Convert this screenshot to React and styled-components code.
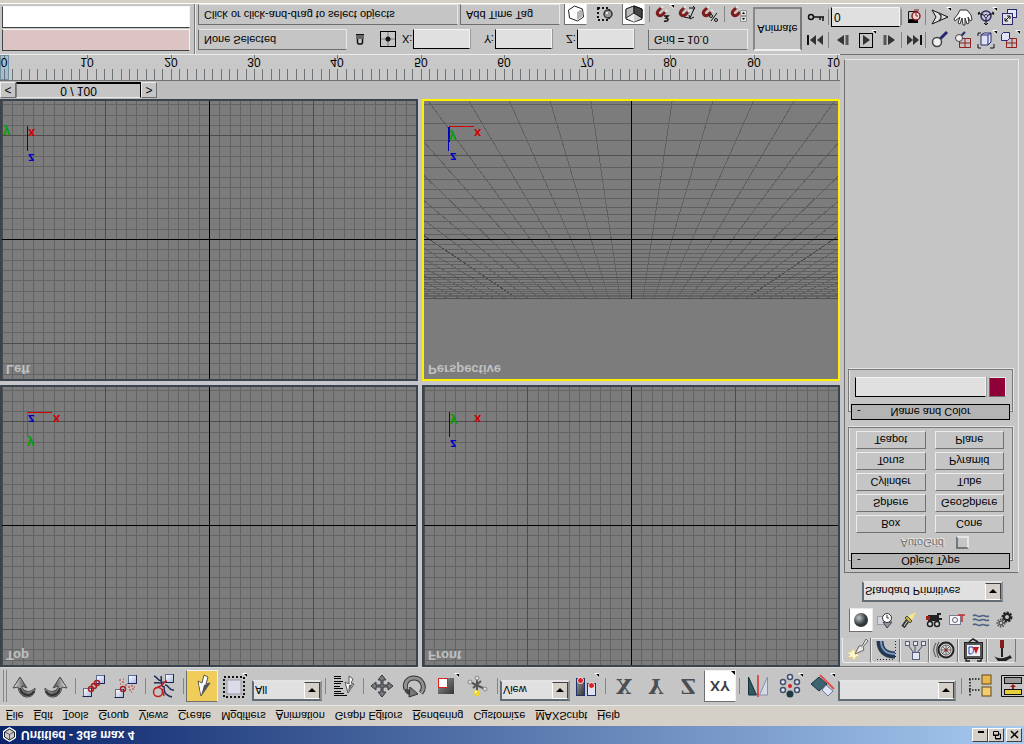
import React from 'react';
import styled, { createGlobalStyle, css } from 'styled-components';

const menus = [
    ['', 'F', 'ile'], ['', 'E', 'dit'], ['', 'T', 'ools'], ['', 'G', 'roup'], ['', 'V', 'iews'],
    ['', 'C', 'reate'], ['M', 'o', 'difiers'], ['', 'A', 'nimation'], ['Graph E', 'd', 'itors'],
    ['', 'R', 'endering'], ['C', 'u', 'stomize'], ['', 'M', 'AXScript'], ['', 'H', 'elp'],
];

const primitives = ['Box', 'Cone', 'Sphere', 'GeoSphere', 'Cylinder', 'Tube', 'Torus', 'Pyramid', 'Teapot', 'Plane'];

// Icon coordinates have y pointing up, like the viewports
const Glyph = ({ w = 26, h = 26, flyout, children }) => (
    <svg width={w} height={h} viewBox={`0 0 ${w} ${h}`} fill="none" aria-hidden="true">
        <g transform={`matrix(1 0 0 -1 0 ${h})`}>
            {children}
            {flyout && <path d={`M${w - 5} 0h5v5z`} fill="#fff" />}
            {flyout && <path d={`M${w - 3} 1h3v3z`} fill="#000" />}
        </g>
    </svg>
);

const Box = ({ x, y, s = 9 }) => (
    <>
        <rect x={x + 0.5} y={y + 0.5} width={s - 1} height={s - 1} fill="url(#boxFill)" stroke="#5a6c9c" />
        <path d={`M${x + s - 0.5} ${y}v${s - 0.5}h${-s}`} stroke="#1c2450" />
    </>
);

const Swoosh = () => (
    <>
        <path d="M9 4L2 15l5-1C8 21 12 24 16 24c5 0 8-3 8-9-3 3-6 4-9 3-3-1-4-3-4-5l5 2z" fill="url(#metal)" stroke="#4a4a4a" />
        <path d="M9 15c1 5 4 7 8 7 3 0 5-2 6-4" stroke="#333" strokeWidth="2" />
    </>
);

const Magnet = () => (
    <>
        <path d="M8 3L4 7c-2 3 1 6 4 4l4-4" stroke="#7c1c1c" strokeWidth="3" />
        <path d="M7 4l2-2M11 8l2-2" stroke="#ddd" strokeWidth="3" />
    </>
);

const icons = {
    undo: <Glyph><Swoosh /></Glyph>,
    redo: <Glyph><g transform="translate(26 0) scale(-1 1)"><Swoosh /></g></Glyph>,
    link: (
        <Glyph>
            <Box x={2} y={15} /><Box x={15} y={2} />
            <g stroke="#a82020" strokeWidth="1.5"><circle cx="10" cy="16" r="2.5" /><circle cx="13" cy="13" r="2.5" /><circle cx="16" cy="10" r="2.5" /></g>
        </Glyph>
    ),
    unlink: (
        <Glyph>
            <Box x={2} y={16} /><Box x={15} y={2} />
            <path d="M6 7h2M9 9h2M7 11h1M10 6h1M12 12h2M15 14h2M18 13h2M16 17h2M19 16h2M21 14h1M18 19h1" stroke="#c03030" />
            <circle cx="10" cy="16" r="2.5" stroke="#a82020" strokeWidth="1.5" />
        </Glyph>
    ),
    bind: (
        <Glyph>
            <path d="M3 3c4 1 3 5 8 5M3 10c4-1 6 1 9-1M13 13c0 5 0 9 8 11M14 12c5 0 3 6 9 5M10 3c1 4-1 8 2 11" stroke="#222c58" strokeWidth="1.5" />
            <Box x={14} y={1} />
            <circle cx="7" cy="19" r="4.5" stroke="#c02020" strokeWidth="1.5" /><path d="M3 16c4-3 9-2 10-7l3-1M11 16l2 7" stroke="#c02020" strokeWidth="1.5" />
        </Glyph>
    ),
    select: (
        <Glyph>
            <path d="M15 2l4 2-2 7 4-1-9 13L9 8l4 2z" fill="#fff" stroke="#555" />
            <path d="M17 5l-2 7 6-2-9 13z" fill="#50545c" /><path d="M10 9l3 3-1 9z" fill="#fff" />
        </Glyph>
    ),
    region: (
        <Glyph flyout>
            <rect x="3" y="4" width="20" height="20" stroke="#111" strokeWidth="2" strokeDasharray="2 2" />
            <rect x="6" y="7" width="14" height="14" fill="#dcdce8" stroke="#9a9aae" />
        </Glyph>
    ),
    byName: (
        <Glyph>
            <path d="M3 3.500h7M3 5.500h7M3 8.500h9M3 10.500h7M3 13.500h6M3 15.500h9M3 18.500h7M3 20.500h10M3 22.500h13" stroke="#000" />
            <path d="M18 3l4 3-2 4 3 1-6 9-3-11 4 2z" fill="#fff" stroke="#555" /><path d="M19 6l-1 6 4-1-5 8z" fill="#666" />
        </Glyph>
    ),
    move: (
        <Glyph>
            <path d="M13 2l4 5h-3v5h5V9l5 4-5 4v-3h-5v5h3l-4 5-4-5h3v-5H7v3l-5-4 5-4v3h5V7H9z" fill="#777b80" stroke="#33363a" />
        </Glyph>
    ),
    rotate: (
        <Glyph>
            <path d="M20 20c5-6 1-15-7-15-7 0-10 6-8 11" stroke="#333" strokeWidth="5" />
            <path d="M20 20c5-6 1-15-7-15-7 0-10 6-8 11" stroke="#909090" strokeWidth="3" />
            <path d="M5 16c1 3 3 4 5 4" stroke="#444" strokeWidth="4" />
            <path d="M9 14l8 7-9 3z" fill="#777" stroke="#333" />
        </Glyph>
    ),
    scale: (
        <Glyph flyout>
            <rect x="5" y="5" width="16" height="16" fill="url(#dark)" />
            <rect x="5.500" y="5.500" width="9" height="9" fill="#fff" stroke="#d22" strokeWidth="1" />
        </Glyph>
    ),
    manipulate: (
        <Glyph>
            <path d="M12 5v15M5 9l15 7M16 8l-8 7" stroke="#555" strokeWidth="2" />
            <g fill="#ddd" stroke="#888"><circle cx="12" cy="5" r="2" /><circle cx="5" cy="9" r="2" /><circle cx="20" cy="16" r="2" /></g>
            <circle cx="12" cy="20" r="3" fill="#f0d820" /><circle cx="11" cy="19" r="1" fill="#fff" />
        </Glyph>
    ),
    pivot: (
        <Glyph flyout>
            <rect x="3.500" y="5.500" width="8" height="17" fill="url(#dark)" stroke="#22306c" />
            <rect x="14.500" y="10.500" width="8" height="12" fill="#dde2f4" stroke="#22306c" />
            <circle cx="7.500" cy="7.500" r="3" fill="#d22" stroke="#eee" /><circle cx="18.500" cy="12.500" r="3" fill="#d22" stroke="#eee" />
        </Glyph>
    ),
    mirror: (
        <Glyph>
            <path d="M3.500 4v18h8z" fill="#325860" stroke="#16303a" /><path d="M22.500 4v18h-8z" fill="#d4dae8" stroke="#8890a8" />
            <path d="M13 2v22" stroke="#d65050" strokeWidth="2" />
        </Glyph>
    ),
    array: (
        <Glyph flyout>
            <g fill="#dfe6f4" stroke="#42506c" strokeWidth="1.500">
                <circle cx="13" cy="4" r="2.500" /><circle cx="6" cy="9" r="2.500" /><circle cx="20" cy="9" r="2.500" />
                <circle cx="6" cy="17" r="2.500" /><circle cx="20" cy="17" r="2.500" />
            </g>
            <circle cx="13" cy="21" r="3.500" fill="#1e3c46" /><circle cx="13" cy="13" r="2" fill="#e02020" />
        </Glyph>
    ),
    align: (
        <Glyph flyout>
            <path d="M10 4l8 7-8 7-8-7z" fill="#3e6470" stroke="#1c343c" /><path d="M17 12l7 6-5 5-6-6z" fill="#dde4f6" stroke="#6c7898" />
            <path d="M11 2l14 14" stroke="#e05050" strokeWidth="2" />
        </Glyph>
    ),
    tracks: (
        <Glyph>
            <path d="M2 6h11M3 6v18M2 17h11" stroke="#111" strokeWidth="1.500" strokeDasharray="1.500 1.500" />
            <rect x="15" y="2" width="9" height="9" fill="#e8b850" stroke="#604818" /><rect x="15" y="14" width="9" height="9" fill="#f4cc74" stroke="#604818" />
        </Glyph>
    ),
    schematic: (
        <Glyph>
            <path d="M26 2.500H2.500v21H26" fill="none" stroke="#111" />
            <rect x="5.500" y="4.500" width="17" height="6" fill="#9a9a9a" stroke="#111" /><rect x="5.500" y="16.500" width="17" height="5" fill="#e8d038" stroke="#111" />
            <path d="M14 11l3 3h-2v2h-2v-2h-2z" fill="#a01818" />
        </Glyph>
    ),
    create: (
        <Glyph w={24} h={24}>
            <path d="M8 10l2 4 4-2-2 4 3 2-4 1-2 4-2-4-5 1 3-3-3-3 4 0z" fill="#fdf6c8" stroke="#d8cc90" />
            <path d="M21 1l2 2-5 6 1 3-9 4 4-8 3 0z" fill="#e8e8e8" stroke="#666" />
        </Glyph>
    ),
    modify: (
        <Glyph w={24} h={24}>
            <path d="M6 3c0 9 5 14 15 14" stroke="#26384f" strokeWidth="7" /><path d="M7 3c0 8 5 13 14 13" stroke="#7c98c8" strokeWidth="2" />
            <path d="M3 21.500h18M21.500 3v18" stroke="#222" strokeDasharray="1 2" />
        </Glyph>
    ),
    hierarchy: (
        <Glyph w={24} h={24}>
            <path d="M5 7l6 8M12 7v8M20 7l-6 8" stroke="#4a5070" />
            <g fill="#e4e6f2" stroke="#585e80"><rect x="2.500" y="3.500" width="4" height="4" /><rect x="10.500" y="3.500" width="4" height="4" /><rect x="18.500" y="3.500" width="4" height="4" /><rect x="9.500" y="14.500" width="7" height="7" /></g>
        </Glyph>
    ),
    motion: (
        <Glyph w={24} h={24}>
            <path d="M4 5c-3 5-3 9 0 14M7 4c-3 5-3 11 0 16" stroke="#444" />
            <circle cx="14" cy="12" r="7.500" fill="#d8d8d8" stroke="#222" strokeWidth="2" /><circle cx="14" cy="12" r="5" stroke="#666" />
            <path d="M14 7v10M9 12h10M10 8l8 8M18 8l-8 8" stroke="#666" /><circle cx="14" cy="12" r="1.500" fill="#a02020" />
        </Glyph>
    ),
    display: (
        <Glyph w={24} h={24}>
            <path d="M8 4l4-3 5 3M5 21v2h4M20 21v2h-4" stroke="#222" strokeWidth="1.500" />
            <rect x="3.500" y="4.500" width="18" height="16" fill="#555" stroke="#222" /><rect x="6" y="7" width="13" height="11" fill="#eef0fa" />
            <path d="M8 9v7c4 0 5-1 4-7z" stroke="#3040a0" /><path d="M12 9l3 7 3-7z" fill="#c81818" />
        </Glyph>
    ),
    utilities: (
        <Glyph w={24} h={24}>
            <path d="M10 2h4v8h-4z" fill="#841c1c" /><path d="M12 10v9" stroke="#222" strokeWidth="2" />
            <path d="M4 18c3 3 12 3 16-1l2 3c-4 1-4 2-6 3H8z" fill="#222" />
        </Glyph>
    ),
    geometry: <Glyph w={20} h={20}><circle cx="10" cy="10" r="7" fill="url(#ball)" /></Glyph>,
    shapes: (
        <Glyph w={20} h={20}>
            <rect x="2.500" y="6.500" width="9" height="8" fill="#d5d5de" stroke="#9a9aaa" /><path d="M8 12h9l-5 6z" fill="#9094a4" stroke="#444" />
            <circle cx="12" cy="8" r="4.500" fill="#fff" stroke="#333" /><path d="M12 5v3h2" stroke="#333" />
        </Glyph>
    ),
    lights: (
        <Glyph w={20} h={20}>
            <path d="M9 10L4 17" stroke="#333" strokeWidth="4" /><path d="M9 10L5 16" stroke="#ddd" strokeWidth="1" />
            <path d="M6 8l5 5 2-2-5-5z" fill="#c8b840" stroke="#444" /><path d="M9 6l8-4-4 8z" fill="#f6e880" />
        </Glyph>
    ),
    cameras: (
        <Glyph w={20} h={20}>
            <rect x="5" y="5" width="11" height="6" fill="#222" /><path d="M3 6h4v4H3z" fill="#a02020" /><path d="M14 4h4M16 9h3" stroke="#222" strokeWidth="2" />
            <g fill="#ddd" stroke="#222" strokeWidth="1.500"><circle cx="7" cy="14" r="2.500" /><circle cx="14" cy="14" r="2.500" /></g>
        </Glyph>
    ),
    helpers: (
        <Glyph w={20} h={20}>
            <rect x="2.500" y="5.500" width="11" height="9" fill="#f4f4fa" stroke="#7a7a90" /><circle cx="8" cy="10" r="2.500" stroke="#667" />
            <path d="M11 5h7M15 5v7" stroke="#c03030" strokeWidth="1.500" />
        </Glyph>
    ),
    warps: <Glyph w={20} h={20}><path d="M2 6c3-3 4 2 8 0s4 2 8 0M2 10c3-3 4 2 8 0s4 2 8 0M2 15c3-3 4 2 8 0s4 2 8 0" stroke="#4e6484" strokeWidth="1.500" /></Glyph>,
    systems: (
        <Glyph w={20} h={20}>
            <g stroke="#222" strokeWidth="3" strokeDasharray="2 1"><circle cx="12" cy="7" r="4" /></g><circle cx="12" cy="7" r="3" stroke="#222" strokeWidth="2" />
            <g stroke="#555" strokeWidth="2" strokeDasharray="1.500 1"><circle cx="6" cy="13" r="3.500" /></g><circle cx="6" cy="13" r="2" stroke="#333" />
        </Glyph>
    ),
    lock: <Glyph w={12} h={14}><path d="M2 2h8v5H2z" fill="#111" /><path d="M2 4h8M2 6h8" stroke="#bbb" /><path d="M3.500 7v4l1 1h3l1-1V7" stroke="#111" strokeWidth="1.500" /></Glyph>,
    absolute: (
        <Glyph w={16} h={16}>
            <rect x="0.500" y="0.500" width="15" height="15" stroke="#000" /><path d="M8 1v14M1 8h14" stroke="#777" /><circle cx="8" cy="8" r="2.500" fill="#111" />
        </Glyph>
    ),
    cube: <Glyph w={20} h={20}><path d="M2.500 6l6-4 8 3 1 8-6 4-8-3z" fill="#fff" stroke="#222" /><path d="M11 8l5-3 1 7-6 4z" fill="#b4b4b4" /></Glyph>,
    crossing: (
        <Glyph w={20} h={20}>
            <rect x="3" y="4" width="11" height="12" stroke="#111" strokeWidth="2" strokeDasharray="2 2" />
            <circle cx="13" cy="10" r="4" fill="#999" stroke="#333" strokeWidth="1.500" /><circle cx="12" cy="9" r="1" fill="#fff" />
        </Glyph>
    ),
    shadedCube: (
        <Glyph w={20} h={20}>
            <path d="M2 5l8-3 8 3v10l-8 3-8-3z" fill="#999" stroke="#111" /><path d="M2 14l8-5v9z" fill="#eee" /><path d="M10 9l8 5-8 4z" fill="#ccc" />
            <path d="M2 5l8-3v7l-8 5z" fill="#bbb" stroke="#333" /><path d="M10 2l8 3v9l-8-5z" fill="#444" stroke="#111" />
        </Glyph>
    ),
    snap3: <Glyph w={20} h={20} flyout><Magnet /><path d="M10 12h4l-2 2c3 0 3 4-2 3" stroke="#111" strokeWidth="1.500" /></Glyph>,
    snapAngle: <Glyph w={20} h={20}><Magnet /><path d="M12 4h6M16 2l2 2-2 2M17 5l-4 9M12 11l1 4 4-2M7 13l5 1" stroke="#111" /></Glyph>,
    snapPercent: <Glyph w={20} h={20}><Magnet /><path d="M17 9l-6 8" stroke="#111" /><circle cx="11" cy="12" r="1.500" stroke="#111" /><circle cx="16" cy="16" r="1.500" stroke="#111" /></Glyph>,
    snapSpinner: <Glyph w={20} h={20}><Magnet /><path d="M11.500 6.500h6v5h-6zM11.500 12.500h6v5h-6z" fill="#ddd" stroke="#999" /><path d="M13 10l1.500-2 1.500 2zM13 14l1.500 2 1.500-2z" fill="#000" /></Glyph>,
    key: <Glyph w={20} h={20}><circle cx="5" cy="10" r="2.500" stroke="#111" strokeWidth="1.500" /><path d="M8 10h10M14 10v3M17 10v4" stroke="#111" strokeWidth="1.500" /></Glyph>,
    timeConfig: (
        <Glyph w={20} h={20}>
            <path d="M4.500 4.500h9v8h-9z" stroke="#111" /><path d="M4 13h10v3H4z" fill="#000" />
            <circle cx="12" cy="9" r="4" fill="#e8d8d8" stroke="#902020" strokeWidth="1.500" /><path d="M12 6v3h2M10 3h5" stroke="#902020" />
        </Glyph>
    ),
    first: <Glyph w={20} h={20}><path d="M2 5v10" stroke="#111" strokeWidth="2" /><path d="M10 5v10L4 10zM17 5v10l-6-5z" fill="#333" /></Glyph>,
    prev: <Glyph w={20} h={20}><path d="M11 5v10L4 10z" fill="#333" /><path d="M14 5v10" stroke="#555" strokeWidth="3" /></Glyph>,
    play: <Glyph w={20} h={20} flyout><rect x="3.500" y="3.500" width="13" height="14" stroke="#000" /><path d="M7 5v10l7-5z" fill="#333" /></Glyph>,
    next: <Glyph w={20} h={20}><path d="M9 5v10l7-5z" fill="#333" /><path d="M6 5v10" stroke="#555" strokeWidth="3" /></Glyph>,
    last: <Glyph w={20} h={20}><path d="M17 5v10" stroke="#111" strokeWidth="2" /><path d="M3 5v10l6-5zM9 5v10l6-5z" fill="#333" /></Glyph>,
    fov: <Glyph w={22} h={20} flyout><path d="M3 3l16 7-16 7 4-7z" stroke="#111" fill="#e0e0e0" /><path d="M10 6c3 3 3 5 0 8" stroke="#333" strokeWidth="1.500" /></Glyph>,
    pan: <Glyph w={22} h={20}><path d="M8 3h7l4 5 1 5-2 1-2-4 1 6-2 1-2-6v7h-2l-1-7-2 6-2-1 2-6-5 4-1-2 4-5z" fill="#fff" stroke="#333" /></Glyph>,
    arc: (
        <Glyph w={22} h={20} flyout>
            <circle cx="11" cy="9" r="5" stroke="#282870" strokeWidth="1.500" /><path d="M11 9v9M11 9l8-3M11 9L3 6M9 16l2 2 2-2M5 5L3 6l1 2M17 5l2 1-1 2" stroke="#111" />
            <circle cx="11" cy="9" r="1.500" fill="#fff" stroke="#282870" />
        </Glyph>
    ),
    minMax: <Glyph w={22} h={20}><rect x="9.500" y="2.500" width="9" height="8" fill="#e4e8f8" stroke="#282870" /><rect x="4.500" y="6.500" width="10" height="11" fill="#ddd" stroke="#282870" /><path d="M7 14l5-5M9 9h3v3M7 11v3h3" stroke="#111" /></Glyph>,
    zoom: <Glyph w={22} h={20}><path d="M11 9l7-7" stroke="#282870" strokeWidth="3" /><circle cx="8" cy="12" r="4.500" fill="#eef2ee" stroke="#444" strokeWidth="1.500" /></Glyph>,
    zoomAll: (
        <Glyph w={22} h={20}>
            <path d="M7.500 8.500h11v9h-11zM13 8v9M7 13h12" stroke="#902020" /><path d="M9 6l4-4" stroke="#282870" strokeWidth="2" /><circle cx="7" cy="8" r="3.500" fill="#eee" stroke="#444" />
        </Glyph>
    ),
    extents: (
        <Glyph w={22} h={20} flyout>
            <path d="M6 5l3-2h7v9l-3 3H6z" fill="#dfe4f4" stroke="#282870" /><path d="M6 5h7v10M13 5l3-2" stroke="#282870" />
            <path d="M3 6V3h3M3 14v4h3M15 18h4v-4" stroke="#111" />
        </Glyph>
    ),
    extentsAll: (
        <Glyph w={22} h={20} flyout>
            <path d="M8.500 8.500h10v9h-10zM14 8v9M8 13h11" stroke="#902020" /><path d="M3.500 4.500l2-2h6v6l-2 2h-6z" fill="#dfe4f4" stroke="#282870" />
        </Glyph>
    ),
};

const toolbar = [
    ['undo', 'redo'], ['link', 'unlink'], ['bind'], ['select', 'region', 'combo:filter'], ['byName'],
    ['move', 'rotate', 'scale', 'manipulate'], ['combo:coords', 'pivot'], ['X', 'Y', 'Z', 'XY'],
    ['mirror', 'array', 'align', 'combo:sets'], ['tracks', 'schematic'],
];

const combos = {
    filter: { value: 'All', lead: 2, size: 70, tail: 0 },
    coords: { value: 'View', lead: 0, size: 70, tail: 0 },
    sets: { value: '', lead: 0, size: 118, tail: 2 },
};

const Combo = ({ value, label, ...rest }) => (
    <ComboFrame {...rest}>
        <select aria-label={label} defaultValue={value}><option>{value}</option></select>
        <ComboArrow aria-hidden="true" />
    </ComboFrame>
);

const ToolItem = ({ id }) => {
    if (id.startsWith('combo:')) {
        const name = id.slice(6);
        const { value, lead, size, tail } = combos[name];
        return <Combo label={name} value={value} $lead={lead} $size={size} $tail={tail} $raised />;
    }
    const active = id === 'select' ? '#f0cc58' : id === 'XY' ? '#ffffff' : undefined;
    return (
        <ToolButton aria-label={id} $active={active} $corner={id === 'XY'}>
            {icons[id] || <AxisName $pair={id === 'XY'}>{id}</AxisName>}
        </ToolButton>
    );
};

const gridLines = (center, limit) => {
    const lines = [];
    for (let i = -20; i <= 20; i++) {
        const at = center + Math.round(i * 10.36);
        if (i !== 0 && at >= 0 && at < limit) lines.push({ at, major: i % 10 === 0 });
    }
    return lines;
};

const OrthoGrid = () => (
    <svg viewBox="0 0 414 278" preserveAspectRatio="xMidYMid slice" shapeRendering="crispEdges">
        {[false, true].map((major) => (
            <g key={String(major)} stroke={major ? '#4c4c4c' : '#646464'}>
                {gridLines(207, 414).filter((l) => l.major === major).map((l) => <path key={`v${l.at}`} d={`M${l.at + 0.5} 0V278`} />)}
                {gridLines(139, 278).filter((l) => l.major === major).map((l) => <path key={`h${l.at}`} d={`M0 ${l.at + 0.5}H414`} />)}
            </g>
        ))}
        <path d="M207.5 0V278M0 139.5H414" stroke="#000" />
    </svg>
);

const range = (from, to) => Array.from({ length: to - from + 1 }, (_, i) => from + i);
const depthY = (k) => 3 + 3550 / (26.1 + k);
const depthX = (j, k) => 207.5 + (j * 525) / (26.1 + k);

const PerspectiveGrid = () => (
    <svg viewBox="0 0 414 278" preserveAspectRatio="xMidYMid slice" shapeRendering="crispEdges">
        {range(-20, 20).map((j) => (
            <path key={`v${j}`} d={`M${depthX(j, 20)} ${depthY(20)}L${depthX(j, -20)} ${depthY(-20)}`} stroke={j % 10 === 0 ? '#484848' : '#606060'} />
        ))}
        {range(-13, 20).map((k) => (
            <path key={`h${k}`} d={`M0 ${Math.round(depthY(k)) + 0.5}H414`} stroke={k % 10 === 0 ? '#505050' : '#606060'} />
        ))}
        <path d="M207.5 80V278M0 139.5H414" stroke="#000" />
    </svg>
);

// Each bar is a filled one pixel box: colour and outline
const axes = {
    Top: { bars: [['#00a000', 'M25 20h1v25h-1z'], ['#d00000', 'M26 44h24v1h-24z']], x: [51, 42], y: [25, 18], z: [26, 42] },
    Front: { bars: [['#0000c0', 'M25 20h1v25h-1z']], x: [50, 42], y: [26, 40], z: [26, 17] },
    Left: { bars: [['#0000c0', 'M25 20h1v25h-1z']], x: [26, 42], y: [1, 43], z: [26, 17] },
    Perspective: { bars: [['#d00000', 'M25 44h25v1h-25z'], ['#0000c0', 'M24 20h1v9h1v15h-2z']], x: [50, 42], y: [25, 38], z: [26, 18] },
};

const Viewport = ({ name, active }) => {
    const a = axes[name];
    return (
        <ViewportFrame $active={active}>
            {name === 'Perspective' ? <PerspectiveGrid /> : <OrthoGrid />}
            <ViewportName>{name}</ViewportName>
            <Tripod width="80" height="70">
                {a.bars.map(([color, d]) => <path key={d} d={d} fill={color} />)}
                <text x={a.x[0]} y={a.x[1]} fill="#d00000">x</text>
                <text x={a.y[0]} y={a.y[1]} fill="#00a000">y</text>
                <text x={a.z[0]} y={a.z[1]} fill="#0000c0">z</text>
            </Tripod>
        </ViewportFrame>
    );
};

const TimeRuler = () => (
    <Ruler>
        <svg width="100%" height="25" shapeRendering="crispEdges">
            <rect x="0.5" y="0.5" width="8" height="24" fill="#a4bccc" stroke="#7090a4" />
            {range(0, 100).map((f) => (
                <path key={f} d={`M${4 + Math.round(f * 8.33)}.5 0v11${f % 10 === 0 ? 'm0 10v4' : ''}`} stroke="#6c7478" />
            ))}
            {range(0, 9).map((t) => (
                <text key={t} x={4 + Math.round(t * 83.3)} y="22" textAnchor="middle">{t * 10}</text>
            ))}
            <text x="100%" y="22" textAnchor="end">10</text>
        </svg>
    </Ruler>
);

const App = () => (
    <Window>
        <GlobalStyle />
        <Defs aria-hidden="true">
            <linearGradient id="boxFill" x2="1" y2="1"><stop stopColor="#fff" /><stop offset="1" stopColor="#a8b8dc" /></linearGradient>
            <linearGradient id="metal" x2="1" y2="0"><stop stopColor="#e8e8e8" /><stop offset="0.500" stopColor="#666" /><stop offset="1" stopColor="#999" /></linearGradient>
            <linearGradient id="dark" x2="1" y2="1"><stop stopColor="#999" /><stop offset="1" stopColor="#333" /></linearGradient>
            <radialGradient id="ball" cx="0.350" cy="0.350"><stop stopColor="#c4c8c8" /><stop offset="1" stopColor="#30383c" /></radialGradient>
        </Defs>

        <TitleBar>
            <Glyph w={15} h={15}>
                <path d="M7.500 0.500l6 3.500v7l-6 3.500-6-3.500V4z" fill="#fff" stroke="#fff" /><path d="M7.500 2l5 3v5l-5 3-5-3V5z" fill="#ccc" stroke="#222" />
                <path d="M7.500 7.500V13M7.500 7.500L3 5M7.500 7.500L12 5" stroke="#555" />
            </Glyph>
            <h1>Untitled - 3ds max 4</h1>
            <CaptionButton aria-label="Minimize"><Glyph w={11} h={10}><path d="M3 2h6" stroke="#000" strokeWidth="2" /></Glyph></CaptionButton>
            <CaptionButton aria-label="Restore"><Glyph w={11} h={10}><path d="M2.500 1.500h5v4h-5zM4.500 5v4h5V4h-2" stroke="#000" /><path d="M4 8.500h6M2 5h5" stroke="#000" /></Glyph></CaptionButton>
            <CaptionButton aria-label="Close" $gap><Glyph w={11} h={10}><path d="M2 1l7 7M9 1l-7 7" stroke="#000" strokeWidth="1.500" /></Glyph></CaptionButton>
        </TitleBar>

        <MenuBar>
            {menus.map(([pre, key, post]) => <button key={pre + key + post}>{pre}<u>{key}</u>{post}</button>)}
        </MenuBar>

        <Toolbar>
            <Grip />
            {toolbar.map((group, i) => (
                <React.Fragment key={group[0]}>
                    {i > 0 && <Divider />}
                    {group.map((id) => <ToolItem key={id} id={id} />)}
                </React.Fragment>
            ))}
        </Toolbar>

        <Middle>
            <Workspace>
                <Viewports>
                    <Viewport name="Top" /><Viewport name="Front" />
                    <Viewport name="Left" /><Viewport name="Perspective" active />
                </Viewports>
                <TimeSlider>
                    <StepButton>&lt;</StepButton>
                    <SliderThumb>0 / 100</SliderThumb>
                    <StepButton>&gt;</StepButton>
                </TimeSlider>
                <TimeRuler />
            </Workspace>

            <CommandPanel>
                <Tabs>
                    {['create', 'modify', 'hierarchy', 'motion', 'display', 'utilities'].map((id, i) => (
                        <Tab key={id} aria-label={id} $active={i === 0}>{icons[id]}</Tab>
                    ))}
                </Tabs>
                <Categories>
                    {['geometry', 'shapes', 'lights', 'cameras', 'helpers', 'warps', 'systems'].map((id, i) => (
                        <CategoryButton key={id} aria-label={id} $active={i === 0}>{icons[id]}</CategoryButton>
                    ))}
                </Categories>
                <CategoryRow>
                    <Combo label="Category" value="Standard Primitives" $lead={21} $size={141} $tail={0} />
                </CategoryRow>
                <Rollouts>
                    <Rollout>
                        <RolloutTitle><span>-</span>Object Type</RolloutTitle>
                        <AutoGrid><span>AutoGrid</span><input type="checkbox" disabled /></AutoGrid>
                        <PrimitiveGrid>
                            {primitives.map((p) => <PrimitiveButton key={p}>{p}</PrimitiveButton>)}
                        </PrimitiveGrid>
                    </Rollout>
                    <Rollout>
                        <RolloutTitle><span>-</span>Name and Color</RolloutTitle>
                        <NameRow>
                            <input type="text" aria-label="Object name" />
                            <button aria-label="Object color" />
                        </NameRow>
                    </Rollout>
                </Rollouts>
            </CommandPanel>
        </Middle>

        <StatusBar>
            <Listener>
                <input aria-label="Macro recorder" />
                <input aria-label="MAXScript listener" />
            </Listener>
            <TallDivider />
            <StatusRows>
                <StatusRow>
                    <StatusBox $width={149}>None Selected</StatusBox>
                    <SmallButton $width={26} aria-label="Lock selection">{icons.lock}</SmallButton>
                    <SmallButton $width={29} aria-label="Absolute mode">{icons.absolute}</SmallButton>
                    {['X', 'Y', 'Z'].map((axis) => <Coordinate key={axis}>{axis}:<input /></Coordinate>)}
                    <StatusBox $width={100}>Grid = 10.0</StatusBox>
                </StatusRow>
                <StatusRow>
                    <StatusBox $width={260}>Click or click-and-drag to select objects</StatusBox>
                    <StatusBox $width={100} $gap>Add Time Tag</StatusBox>
                    <ToggleGroup>
                        <SmallButton $width={23} $active aria-label="Degradation override">{icons.cube}</SmallButton>
                        <SmallButton $width={23} aria-label="Crossing selection">{icons.crossing}</SmallButton>
                        <SmallButton $width={23} $active aria-label="Shading">{icons.shadedCube}</SmallButton>
                    </ToggleGroup>
                    <Divider />
                    <SmallButton $width={23} aria-label="3D snap">{icons.snap3}</SmallButton>
                    <SmallButton $width={23} aria-label="Angle snap">{icons.snapAngle}</SmallButton>
                    <SmallButton $width={23} aria-label="Percent snap">{icons.snapPercent}</SmallButton>
                    <Divider />
                    <SmallButton $width={23} aria-label="Spinner snap">{icons.snapSpinner}</SmallButton>
                </StatusRow>
            </StatusRows>
            <AnimateButton>Animate</AnimateButton>
            <ControlRows>
                <ControlRow>
                    <SmallButton $width={22} aria-label="Go to start">{icons.first}</SmallButton>
                    <Divider $narrow />
                    <SmallButton $width={23} aria-label="Previous frame">{icons.prev}</SmallButton>
                    <SmallButton $width={23} aria-label="Play">{icons.play}</SmallButton>
                    <SmallButton $width={23} aria-label="Next frame">{icons.next}</SmallButton>
                    <Divider $narrow />
                    <SmallButton $width={20} aria-label="Go to end">{icons.last}</SmallButton>
                    <Divider $narrow />
                </ControlRow>
                <ControlRow>
                    <SmallButton $width={22} aria-label="Key mode">{icons.key}</SmallButton>
                    <Divider $narrow />
                    <FrameInput aria-label="Current frame" defaultValue="0" />
                    <Divider $narrow />
                    <SmallButton $width={20} aria-label="Time configuration">{icons.timeConfig}</SmallButton>
                    <Divider $narrow />
                </ControlRow>
            </ControlRows>
            <NavGrid>
                {['zoom', 'zoomAll', 'extents', 'extentsAll', 'fov', 'pan', 'arc', 'minMax'].map((id) => (
                    <SmallButton key={id} $width={23} aria-label={id}>{icons[id]}</SmallButton>
                ))}
            </NavGrid>
        </StatusBar>
        <BottomEdge />
    </Window>
);

const sunken = css`
border: 1px solid;
border-color: #6e6e6e #e8e8e8 #e8e8e8 #6e6e6e;
`;

const raised = css`
border: 1px solid;
border-color: #707070 #707070 #ececec #ececec;
`;

const field = css`
border: 1px solid;
border-color: #000 #f4f4f4 #f4f4f4 #000;
background: #e0e0e0;
box-shadow: 1px 0 0 #999;
`;

const GlobalStyle = createGlobalStyle`
* {
    box-sizing: border-box;
}

body {
    margin: 0;
    background: #c5c5c5;
}

body, button, input, select {
    font-family: "Liberation Sans", Arial, sans-serif;
    font-size: 11px;
    color: #000;
}

button, input, select {
    margin: 0;
    padding: 0;
    border: none;
    border-radius: 0;
    background: none;
    outline: none;
}

svg {
    display: block;
    flex: none;
}
`;

const Window = styled.div`
display: flex;
flex-direction: column;
min-height: 100vh;
background: #c5c5c5;
transform: scaleY(-1);
`;

const Defs = styled.svg`
position: absolute;
width: 0;
height: 0;
`;

const TitleBar = styled.header`
display: flex;
align-items: center;
height: 18px;
padding: 0 2px;
background: linear-gradient(to right, #0a246a, #a6caf0);

h1 {
    flex: 1;
    margin: 0 0 0 4px;
    font-size: 12px;
    font-weight: 700;
    color: #fff;
}
`;

const CaptionButton = styled.button`
display: flex;
align-items: center;
justify-content: center;
width: 16px;
height: 14px;
margin-left: ${(p) => (p.$gap ? '2px' : '0')};
background: #d4d0c8;
border: 1px solid;
border-color: #404040 #404040 #fff #fff;
`;

const MenuBar = styled.nav`
display: flex;
align-items: center;
height: 20px;
padding-left: 1px;
background: #d4d0c8;

button {
    padding: 0 5px;
    line-height: 18px;
    text-underline-offset: 1px;
}
`;

const Toolbar = styled.div`
display: flex;
align-items: center;
height: 39px;
border-top: 1px solid #e8e8e8;
border-bottom: 1px solid #d4d4d4;
overflow: hidden;
`;

const Grip = styled.span`
flex: none;
width: 4px;
height: 32px;
margin: 0 1px 0 3px;
border-left: 1px solid #888;
border-right: 1px solid #888;
`;

const Divider = styled.span`
flex: none;
width: ${(p) => (p.$narrow ? '4px' : '6px')};
height: 16px;
padding-left: ${(p) => (p.$narrow ? '1px' : '3px')};

&::before {
    content: '';
    display: block;
    width: 1px;
    height: 100%;
    background: #858585;
}
`;

const ToolButton = styled.button`
position: relative;
display: flex;
align-items: center;
justify-content: center;
flex: none;
width: 32px;
height: 32px;
${(p) => p.$active && css`
background: ${p.$active};
border: 1px solid;
border-color: #707070 #f0f0f0 #f0f0f0 #707070;
`}
${(p) => p.$corner && css`
&::after {
    content: '';
    position: absolute;
    right: 0;
    bottom: 0;
    border: 2px solid transparent;
    border-right-color: #000;
    border-bottom-color: #000;
}
`}
`;

const AxisName = styled.span`
font-family: ${(p) => (p.$pair ? '"Liberation Sans", sans-serif' : '"DejaVu Serif", serif')};
font-size: ${(p) => (p.$pair ? '15px' : '20px')};
font-weight: 700;
line-height: 24px;
color: ${(p) => (p.$pair ? '#3c4044' : '#4c4f52')};
`;

const ComboFrame = styled.span`
display: flex;
flex: none;
width: ${(p) => p.$size}px;
height: 21px;
margin: 0 ${(p) => p.$tail}px 0 ${(p) => p.$lead}px;
${(p) => p.$raised && 'align-self: flex-start; margin-top: 4px;'}
border: 2px solid;
border-color: #626c74 #8c9094 #e4e4e4 #626c74;
background: #e0e0e0;

select {
    flex: 1;
    min-width: 0;
    appearance: none;
    padding-left: 1px;
}
`;

const ComboArrow = styled.span`
display: flex;
align-items: center;
justify-content: center;
width: 16px;
background: #d4d0c8;
border: 1px solid;
border-color: #fff #404040 #404040 #fff;
pointer-events: none;

&::before {
    content: '';
    border: 4px solid transparent;
    border-top-color: #000;
    border-bottom-width: 0;
}
`;

const Middle = styled.main`
display: flex;
flex: 1;
`;

const Workspace = styled.div`
display: flex;
flex-direction: column;
flex: 1;
min-width: 0;
`;

const Viewports = styled.div`
display: grid;
flex: 1;
grid-template-columns: 1fr 1fr;
grid-template-rows: 1fr 1fr;
gap: 4px;
background: #c6c6ca;
`;

const ViewportFrame = styled.section`
position: relative;
min-height: 200px;
overflow: hidden;
border: 2px solid ${(p) => (p.$active ? '#fff000' : '#3a444e')};
background: #7c7c7c;

> svg:first-child {
    position: absolute;
    width: 100%;
    height: 100%;
}
`;

const ViewportName = styled.h2`
position: absolute;
top: 2px;
left: 4px;
margin: 0;
font-size: 13px;
font-weight: 700;
line-height: 16px;
color: #c0c0c0;
`;

const Tripod = styled.svg`
position: absolute;
left: 0;
bottom: 0;

path {
    shape-rendering: crispEdges;
}

text {
    font-size: 13px;
    font-weight: 700;
}
`;

const TimeSlider = styled.div`
display: flex;
height: 18px;
padding: 1px 0;
background: #bdbdbd;
`;

const StepButton = styled.button`
width: 16px;
font-size: 12px;
line-height: 14px;
background: #c5c5c5;
${raised}
`;

const SliderThumb = styled.button`
width: 125px;
font-size: 12px;
line-height: 13px;
background: #c5c5c5;
border: 1px solid;
border-color: #e8e8e8 #000 #000 #808080;
border-bottom-width: 2px;
`;

const Ruler = styled.div`
height: 27px;
border-top: 1px solid #707070;
border-bottom: 1px solid #ececec;
background: #c8c8c8;
overflow: hidden;

text {
    font-size: 12px;
}
`;

const CommandPanel = styled.aside`
display: flex;
flex-direction: column;
width: 184px;
padding: 3px 0 4px 1px;
border-bottom: 1px solid #707070;
border-top: 1px solid #707070;
`;

const Tabs = styled.div`
display: flex;
align-items: flex-start;
height: 25px;
padding-left: 1px;
border-bottom: 1px solid #ececec;
`;

const Tab = styled.button`
display: flex;
align-items: center;
justify-content: center;
width: 29px;
height: 24px;
border-top: 1px solid #ececec;
border-left: 1px solid #ececec;
border-right: 1px solid #777;
border-radius: 3px 3px 0 0;
${(p) => p.$active && 'height: 25px; background: #c8c8c8;'}
`;

const Categories = styled.div`
display: flex;
margin: 6px 0 0 8px;
`;

const CategoryButton = styled.button`
display: flex;
align-items: center;
justify-content: center;
width: 24px;
height: 24px;
${(p) => p.$active && css`background: #fff; ${sunken}`}
`;

const CategoryRow = styled.div`
display: flex;
margin: 6px 0 8px;
`;

const Rollouts = styled.div`
display: flex;
flex-direction: column;
gap: 15px;
flex: 1;
margin: 0 5px 0 3px;
padding: 11px 5px 0 3px;
${sunken}
`;

const Rollout = styled.section`
padding: 0 8px 3px 7px;
border: 1px solid #777;
box-shadow: inset 1px 1px 0 #e4e4e4, 1px 1px 0 #e4e4e4;
`;

const RolloutTitle = styled.h3`
position: relative;
margin: -9px -6px 0 -5px;
font-size: 11px;
font-weight: 400;
line-height: 14px;
text-align: center;
background: #b4b4b4;
border: 1px solid #000;

span {
    position: absolute;
    left: 5px;
}
`;

const AutoGrid = styled.label`
display: flex;
align-items: center;
justify-content: flex-end;
gap: 12px;
height: 20px;
padding-right: 35px;
color: #777;
text-shadow: 1px 1px 0 #eee;

input {
    appearance: none;
    width: 13px;
    height: 13px;
    border: 2px solid;
    border-color: #70787c #e4e4e4 #e4e4e4 #70787c;
}
`;

const PrimitiveGrid = styled.div`
display: grid;
grid-template-columns: 1fr 1fr;
gap: 3px 9px;
`;

const PrimitiveButton = styled.button`
height: 18px;
line-height: 16px;
${raised}
`;

const NameRow = styled.div`
display: flex;
justify-content: space-between;
margin: 7px -2px 4px -1px;

input {
    width: 131px;
    height: 20px;
    ${field}
}

button {
    width: 17px;
    height: 20px;
    background: #900038;
    ${sunken}
}
`;

const StatusBar = styled.footer`
display: flex;
height: 50px;
`;

const Listener = styled.div`
display: flex;
flex-direction: column;
gap: 1px;
width: 190px;
padding: 3px 0 0 2px;

input {
    height: 22px;
    background: #fff;
    border: 1px solid;
    border-color: #444 #f4f4f4 #f4f4f4 #444;
}

input:first-child {
    background: #dcc4c4;
}
`;

const TallDivider = styled.span`
width: 2px;
margin: 0 2px 0 4px;
border-left: 1px solid #777;
border-right: 1px solid #e8e8e8;
`;

const StatusRows = styled.div`
display: flex;
flex-direction: column;
gap: 4px;
padding-top: 4px;
`;

const StatusRow = styled.div`
display: flex;
align-items: center;
height: 21px;
`;

const StatusBox = styled.div`
width: ${(p) => p.$width}px;
height: 21px;
margin-left: ${(p) => (p.$gap ? '2px' : '0')};
padding-left: 5px;
line-height: 19px;
white-space: nowrap;
${sunken}
`;

const SmallButton = styled.button`
display: flex;
align-items: center;
justify-content: center;
flex: none;
width: ${(p) => p.$width}px;
height: 22px;
${(p) => p.$active && css`background: #fff; ${sunken}`}
`;

const Coordinate = styled.label`
display: flex;
align-items: center;
justify-content: space-between;
width: 68px;
margin-right: 14px;

input {
    width: 57px;
    height: 20px;
    ${field}
}
`;

const ToggleGroup = styled.div`
display: flex;
gap: 6px;
margin: 0 1px 0 4px;
`;

const AnimateButton = styled.button`
width: 49px;
height: 44px;
margin: 3px 3px 0 3px;
border: 2px solid;
border-color: #f0f0f0 #777 #888 #888;
`;

const ControlRows = styled.div`
display: flex;
flex-direction: column;
gap: 1px;
padding-top: 3px;
`;

const ControlRow = styled.div`
display: flex;
align-items: center;
height: 22px;
`;

const FrameInput = styled.input`
${field}
width: 69px;
height: 20px;
padding-left: 2px;
font-size: 12px;
`;

const NavGrid = styled.div`
display: grid;
grid-template-columns: repeat(4, 23px);
grid-auto-rows: 22px;
gap: 1px 0;
padding-top: 3px;
`;

const BottomEdge = styled.div`
height: 4px;
background: #d4d0c8;
border-top: 1px solid #fff;
`;

export default App;
